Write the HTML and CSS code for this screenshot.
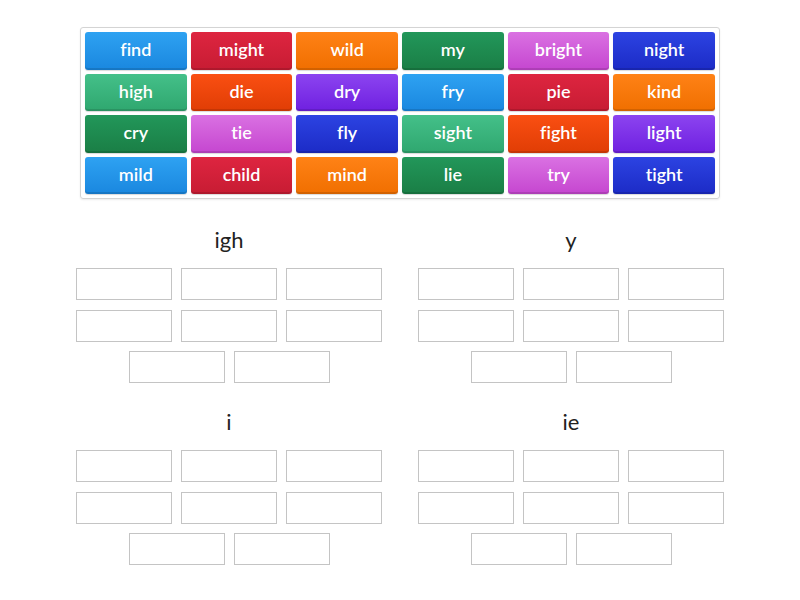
FILE: index.html
```html
<!DOCTYPE html>
<html>
<head>
<meta charset="utf-8">
<link rel="stylesheet" href="styles.css">
</head>
<body>
<div class="page">
  <div class="bank">
    <div class="tile c1">find</div>
    <div class="tile c2">might</div>
    <div class="tile c3">wild</div>
    <div class="tile c4">my</div>
    <div class="tile c5">bright</div>
    <div class="tile c6">night</div>
    <div class="tile c7">high</div>
    <div class="tile c8">die</div>
    <div class="tile c9">dry</div>
    <div class="tile c1">fry</div>
    <div class="tile c2">pie</div>
    <div class="tile c3">kind</div>
    <div class="tile c4">cry</div>
    <div class="tile c5">tie</div>
    <div class="tile c6">fly</div>
    <div class="tile c7">sight</div>
    <div class="tile c8">fight</div>
    <div class="tile c9">light</div>
    <div class="tile c1">mild</div>
    <div class="tile c2">child</div>
    <div class="tile c3">mind</div>
    <div class="tile c4">lie</div>
    <div class="tile c5">try</div>
    <div class="tile c6">tight</div>
  </div>

  <div class="groups">
    <div class="group">
      <div class="title">igh</div>
      <div class="slots">
        <div class="slot"></div><div class="slot"></div><div class="slot"></div>
        <div class="slot"></div><div class="slot"></div><div class="slot"></div>
        <div class="slot"></div><div class="slot"></div>
      </div>
    </div>
    <div class="group">
      <div class="title">y</div>
      <div class="slots">
        <div class="slot"></div><div class="slot"></div><div class="slot"></div>
        <div class="slot"></div><div class="slot"></div><div class="slot"></div>
        <div class="slot"></div><div class="slot"></div>
      </div>
    </div>
    <div class="group">
      <div class="title">i</div>
      <div class="slots">
        <div class="slot"></div><div class="slot"></div><div class="slot"></div>
        <div class="slot"></div><div class="slot"></div><div class="slot"></div>
        <div class="slot"></div><div class="slot"></div>
      </div>
    </div>
    <div class="group">
      <div class="title">ie</div>
      <div class="slots">
        <div class="slot"></div><div class="slot"></div><div class="slot"></div>
        <div class="slot"></div><div class="slot"></div><div class="slot"></div>
        <div class="slot"></div><div class="slot"></div>
      </div>
    </div>
  </div>
</div>
</body>
</html>
```

FILE: styles.css
```css
* { box-sizing: border-box; }
html, body {
  margin: 0;
  padding: 0;
  background: #ffffff;
  font-family: Lato, "Open Sans", "Liberation Sans", sans-serif;
  font-variant-ligatures: none;
}
.page {
  width: 800px;
  height: 600px;
  padding-top: 27px;
}
.bank {
  width: 640px;
  margin-left: 80px;
  border: 1px solid #d4d4d4;
  border-radius: 3px;
  padding: 4px;
  display: grid;
  grid-template-columns: repeat(6, 1fr);
  grid-auto-rows: 37.5px;
  gap: 4px;
  box-shadow: 0 1px 2px rgba(0,0,0,0.08);
}
.tile {
  border-radius: 3px;
  color: #ffffff;
  font-weight: 600;
  font-size: 18px;
  display: flex;
  align-items: center;
  justify-content: center;
  padding-bottom: 3px;
  box-shadow: inset 0 -2px 0 rgba(0,0,0,0.12), 0 1px 1px rgba(0,0,0,0.15);
}
.c1 { background: linear-gradient(#2ea2f2, #1a87df); }
.c2 { background: linear-gradient(#de2540, #c71c33); }
.c3 { background: linear-gradient(#ff8216, #f06f00); }
.c4 { background: linear-gradient(#22975a, #1a7e45); }
.c5 { background: linear-gradient(#da71e2, #c546d0); }
.c6 { background: linear-gradient(#2c43e2, #1c2bc6); }
.c7 { background: linear-gradient(#44c089, #2fa76f); }
.c8 { background: linear-gradient(#fa4f12, #e03d05); }
.c9 { background: linear-gradient(#8c44f0, #6f20e0); }

.groups {
  display: grid;
  grid-template-columns: 306px 306px;
  column-gap: 36px;
  row-gap: 26px;
  margin-left: 76px;
  margin-top: 28px;
}
.title {
  text-align: center;
  font-size: 22px;
  color: #222222;
  height: 24px;
  line-height: 24px;
  margin-bottom: 17px;
  padding-top: 1px;
}
.slots {
  width: 306px;
  display: flex;
  flex-wrap: wrap;
  justify-content: center;
  gap: 9.5px 9px;
}
.slot {
  width: 96px;
  height: 32px;
  border: 1px solid #c4c4c4;
  background: #ffffff;
}
```
